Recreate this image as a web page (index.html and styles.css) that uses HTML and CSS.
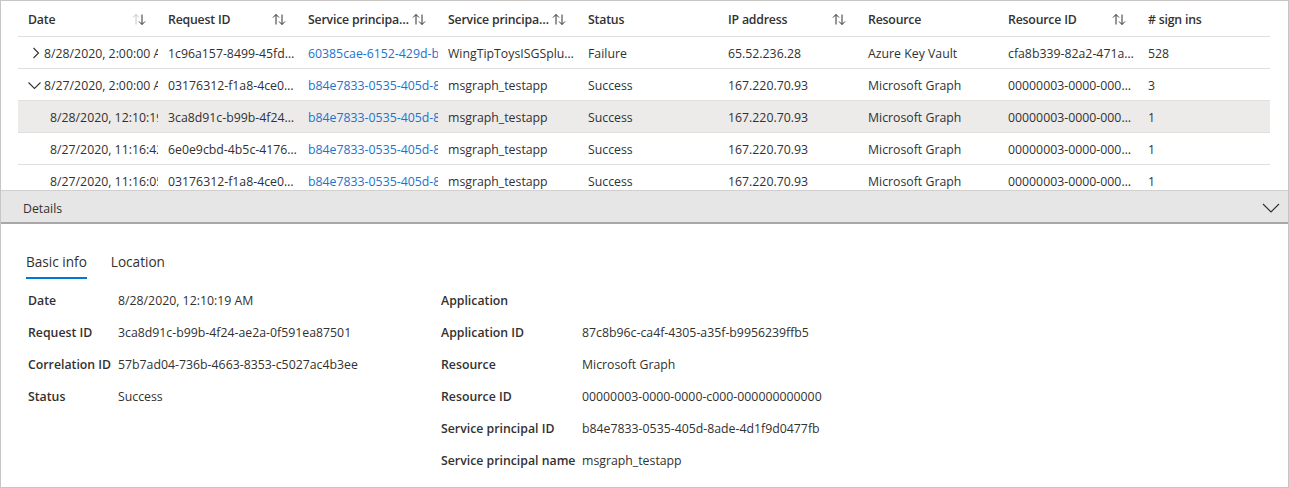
FILE: index.html
```html
<!DOCTYPE html>
<html lang="en">
<head>
<meta charset="utf-8">
<title>Sign-ins</title>
<link rel="stylesheet" href="styles.css">
</head>
<body>
<div class="frame">
  <div class="grid-view">
    <div class="row head">
      <div class="hcell"><span class="htext">Date</span><svg class="sort" viewBox="0 0 14 12"><path class="up light" d="M4 11.5V1.5M1 4.5L4 1.5L7 4.5"/><path class="down" d="M10 1.5V11.5M7 8.5L10 11.5L13 8.5"/></svg></div>
      <div class="hcell"><span class="htext">Request ID</span><svg class="sort" viewBox="0 0 14 12"><path class="up" d="M4 11.5V1.5M1 4.5L4 1.5L7 4.5"/><path class="down" d="M10 1.5V11.5M7 8.5L10 11.5L13 8.5"/></svg></div>
      <div class="hcell"><span class="htext">Service principal ID</span><svg class="sort" viewBox="0 0 14 12"><path class="up" d="M4 11.5V1.5M1 4.5L4 1.5L7 4.5"/><path class="down" d="M10 1.5V11.5M7 8.5L10 11.5L13 8.5"/></svg></div>
      <div class="hcell"><span class="htext">Service principal name</span><svg class="sort" viewBox="0 0 14 12"><path class="up" d="M4 11.5V1.5M1 4.5L4 1.5L7 4.5"/><path class="down" d="M10 1.5V11.5M7 8.5L10 11.5L13 8.5"/></svg></div>
      <div class="hcell"><span class="htext">Status</span></div>
      <div class="hcell"><span class="htext">IP address</span><svg class="sort" viewBox="0 0 14 12"><path class="up" d="M4 11.5V1.5M1 4.5L4 1.5L7 4.5"/><path class="down" d="M10 1.5V11.5M7 8.5L10 11.5L13 8.5"/></svg></div>
      <div class="hcell"><span class="htext">Resource</span></div>
      <div class="hcell"><span class="htext">Resource ID</span><svg class="sort" viewBox="0 0 14 12"><path class="up" d="M4 11.5V1.5M1 4.5L4 1.5L7 4.5"/><path class="down" d="M10 1.5V11.5M7 8.5L10 11.5L13 8.5"/></svg></div>
      <div class="hcell"><span class="htext"># sign ins</span></div>
    </div>

    <div class="row">
      <div class="cell clip date"><svg class="expander" viewBox="0 0 16 12"><path d="M5.5 1L10.5 6L5.5 11"/></svg>8/28/2020, 2:00:00 AM</div>
      <div class="cell">1c96a157-8499-45fd-a6d8-3b7e4c6d2a10</div>
      <div class="cell clip link">60385cae-6152-429d-b5a1-4c8f2e1d9a3c</div>
      <div class="cell">WingTipToysISGSplunkApp</div>
      <div class="cell">Failure</div>
      <div class="cell">65.52.236.28</div>
      <div class="cell">Azure Key Vault</div>
      <div class="cell">cfa8b339-82a2-471a-a3c9-0fc0be7a4093</div>
      <div class="cell">528</div>
    </div>

    <div class="row">
      <div class="cell clip date"><svg class="expander" viewBox="0 0 16 12"><path d="M0.5 3.5L6.5 9.5L12.5 3.5"/></svg>8/27/2020, 2:00:00 AM</div>
      <div class="cell">03176312-f1a8-4ce0-9d61-8e1b7c2a5f44</div>
      <div class="cell clip link">b84e7833-0535-405d-8ade-4d1f9d0477fb</div>
      <div class="cell">msgraph_testapp</div>
      <div class="cell">Success</div>
      <div class="cell">167.220.70.93</div>
      <div class="cell">Microsoft Graph</div>
      <div class="cell">00000003-0000-0000-c000-000000000000</div>
      <div class="cell">3</div>
    </div>

    <div class="row selected">
      <div class="cell clip child">8/28/2020, 12:10:19 AM</div>
      <div class="cell">3ca8d91c-b99b-4f24-ae2a-0f591ea87501</div>
      <div class="cell clip link">b84e7833-0535-405d-8ade-4d1f9d0477fb</div>
      <div class="cell">msgraph_testapp</div>
      <div class="cell">Success</div>
      <div class="cell">167.220.70.93</div>
      <div class="cell">Microsoft Graph</div>
      <div class="cell">00000003-0000-0000-c000-000000000000</div>
      <div class="cell">1</div>
    </div>

    <div class="row">
      <div class="cell clip child">8/27/2020, 11:16:42 PM</div>
      <div class="cell">6e0e9cbd-4b5c-4176-9a2e-51c3d8f0b7aa</div>
      <div class="cell clip link">b84e7833-0535-405d-8ade-4d1f9d0477fb</div>
      <div class="cell">msgraph_testapp</div>
      <div class="cell">Success</div>
      <div class="cell">167.220.70.93</div>
      <div class="cell">Microsoft Graph</div>
      <div class="cell">00000003-0000-0000-c000-000000000000</div>
      <div class="cell">1</div>
    </div>

    <div class="row">
      <div class="cell clip child">8/27/2020, 11:16:05 PM</div>
      <div class="cell">03176312-f1a8-4ce0-9d61-8e1b7c2a5f44</div>
      <div class="cell clip link">b84e7833-0535-405d-8ade-4d1f9d0477fb</div>
      <div class="cell">msgraph_testapp</div>
      <div class="cell">Success</div>
      <div class="cell">167.220.70.93</div>
      <div class="cell">Microsoft Graph</div>
      <div class="cell">00000003-0000-0000-c000-000000000000</div>
      <div class="cell">1</div>
    </div>
  </div>

  <div class="details-bar">
    <span class="details-title">Details</span>
    <svg class="collapse" viewBox="0 0 18 10"><path d="M1 1L9 9L17 1"/></svg>
  </div>

  <div class="details">
    <div class="tabs">
      <div class="tab active">Basic info</div>
      <div class="tab">Location</div>
    </div>
    <div class="props">
      <div class="prop-grid left">
        <div class="label">Date</div><div class="value">8/28/2020, 12:10:19 AM</div>
        <div class="label">Request ID</div><div class="value">3ca8d91c-b99b-4f24-ae2a-0f591ea87501</div>
        <div class="label">Correlation ID</div><div class="value">57b7ad04-736b-4663-8353-c5027ac4b3ee</div>
        <div class="label">Status</div><div class="value">Success</div>
      </div>
      <div class="prop-grid right">
        <div class="label">Application</div><div class="value"></div>
        <div class="label">Application ID</div><div class="value">87c8b96c-ca4f-4305-a35f-b9956239ffb5</div>
        <div class="label">Resource</div><div class="value">Microsoft Graph</div>
        <div class="label">Resource ID</div><div class="value">00000003-0000-0000-c000-000000000000</div>
        <div class="label">Service principal ID</div><div class="value">b84e7833-0535-405d-8ade-4d1f9d0477fb</div>
        <div class="label">Service principal name</div><div class="value">msgraph_testapp</div>
      </div>
    </div>
  </div>
</div>
</body>
</html>
```

FILE: styles.css
```css
* { box-sizing: border-box; }

html, body {
  margin: 0;
  padding: 0;
  background: #ffffff;
}

body {
  font-family: "Open Sans", "Noto Sans", "Liberation Sans", sans-serif;
  font-size: 12.3px;
  color: #323130;
}

.frame {
  width: 1289px;
  height: 488px;
  border: 1px solid #c8c6c4;
  display: flex;
  flex-direction: column;
  overflow: hidden;
}

.grid-view {
  height: 189px;
  flex: none;
  overflow: hidden;
  padding: 0 18px 0 17px;
}

.row {
  display: grid;
  grid-template-columns: repeat(8, 140px) 1fr;
  height: 32px;
  border-bottom: 1px solid #e1dfdd;
  align-items: center;
}

.row.head {
  height: 36px;
}

.row.selected {
  background: #edebe9;
}

.hcell {
  display: flex;
  align-items: center;
  padding: 1px 11px 0 10px;
  min-width: 0;
  font-weight: 600;
  letter-spacing: -0.2px;
  height: 100%;
}

.htext {
  flex: 1;
  min-width: 0;
  white-space: nowrap;
  overflow: hidden;
  text-overflow: ellipsis;
}

.sort {
  flex: none;
  width: 14px;
  height: 12px;
  margin-right: 1px;
}

.sort path {
  fill: none;
  stroke: #323130;
  stroke-width: 1;
}

.sort path.light {
  stroke: #c8c6c4;
}

.cell {
  padding-left: 10px;
  padding-right: 1px;
  white-space: nowrap;
  overflow: hidden;
  text-overflow: ellipsis;
  min-width: 0;
  line-height: 33px;
  height: 100%;
}

.cell.clip {
  text-overflow: clip;
  padding-right: 0;
}

.cell.child {
  padding-left: 32px;
}

.cell.link {
  color: #1a73d0;
}

.expander {
  width: 16px;
  height: 12px;
  vertical-align: -1px;
}

.expander path {
  fill: none;
  stroke: #323130;
  stroke-width: 1.1;
}

.details-bar {
  flex: none;
  height: 34px;
  background: #e6e6e6;
  border-top: 1px solid #d2d0ce;
  border-bottom: 2px solid #a8a8a8;
  display: flex;
  align-items: center;
  justify-content: space-between;
  padding: 3px 8px 0 22px;
}

.collapse {
  width: 18px;
  height: 10px;
}

.collapse path {
  fill: none;
  stroke: #323130;
  stroke-width: 1.1;
}

.details {
  flex: 1;
  padding: 0 0 0 25px;
}

.tabs {
  display: flex;
  gap: 24px;
  padding-top: 28px;
}

.tab {
  font-size: 13.6px;
  line-height: 20px;
  padding-bottom: 5px;
  border-bottom: 2px solid transparent;
}

.tab.active {
  border-bottom-color: #0078d4;
}

.props {
  display: flex;
  padding-top: 5px;
  padding-left: 2px;
}

.prop-grid {
  display: grid;
  grid-auto-rows: 32px;
  align-items: center;
}

.prop-grid.left {
  width: 413px;
  grid-template-columns: 90px 1fr;
}

.prop-grid.right {
  grid-template-columns: 141px 1fr;
}

.label {
  font-weight: 600;
  white-space: nowrap;
}

.value {
  white-space: nowrap;
}
```
